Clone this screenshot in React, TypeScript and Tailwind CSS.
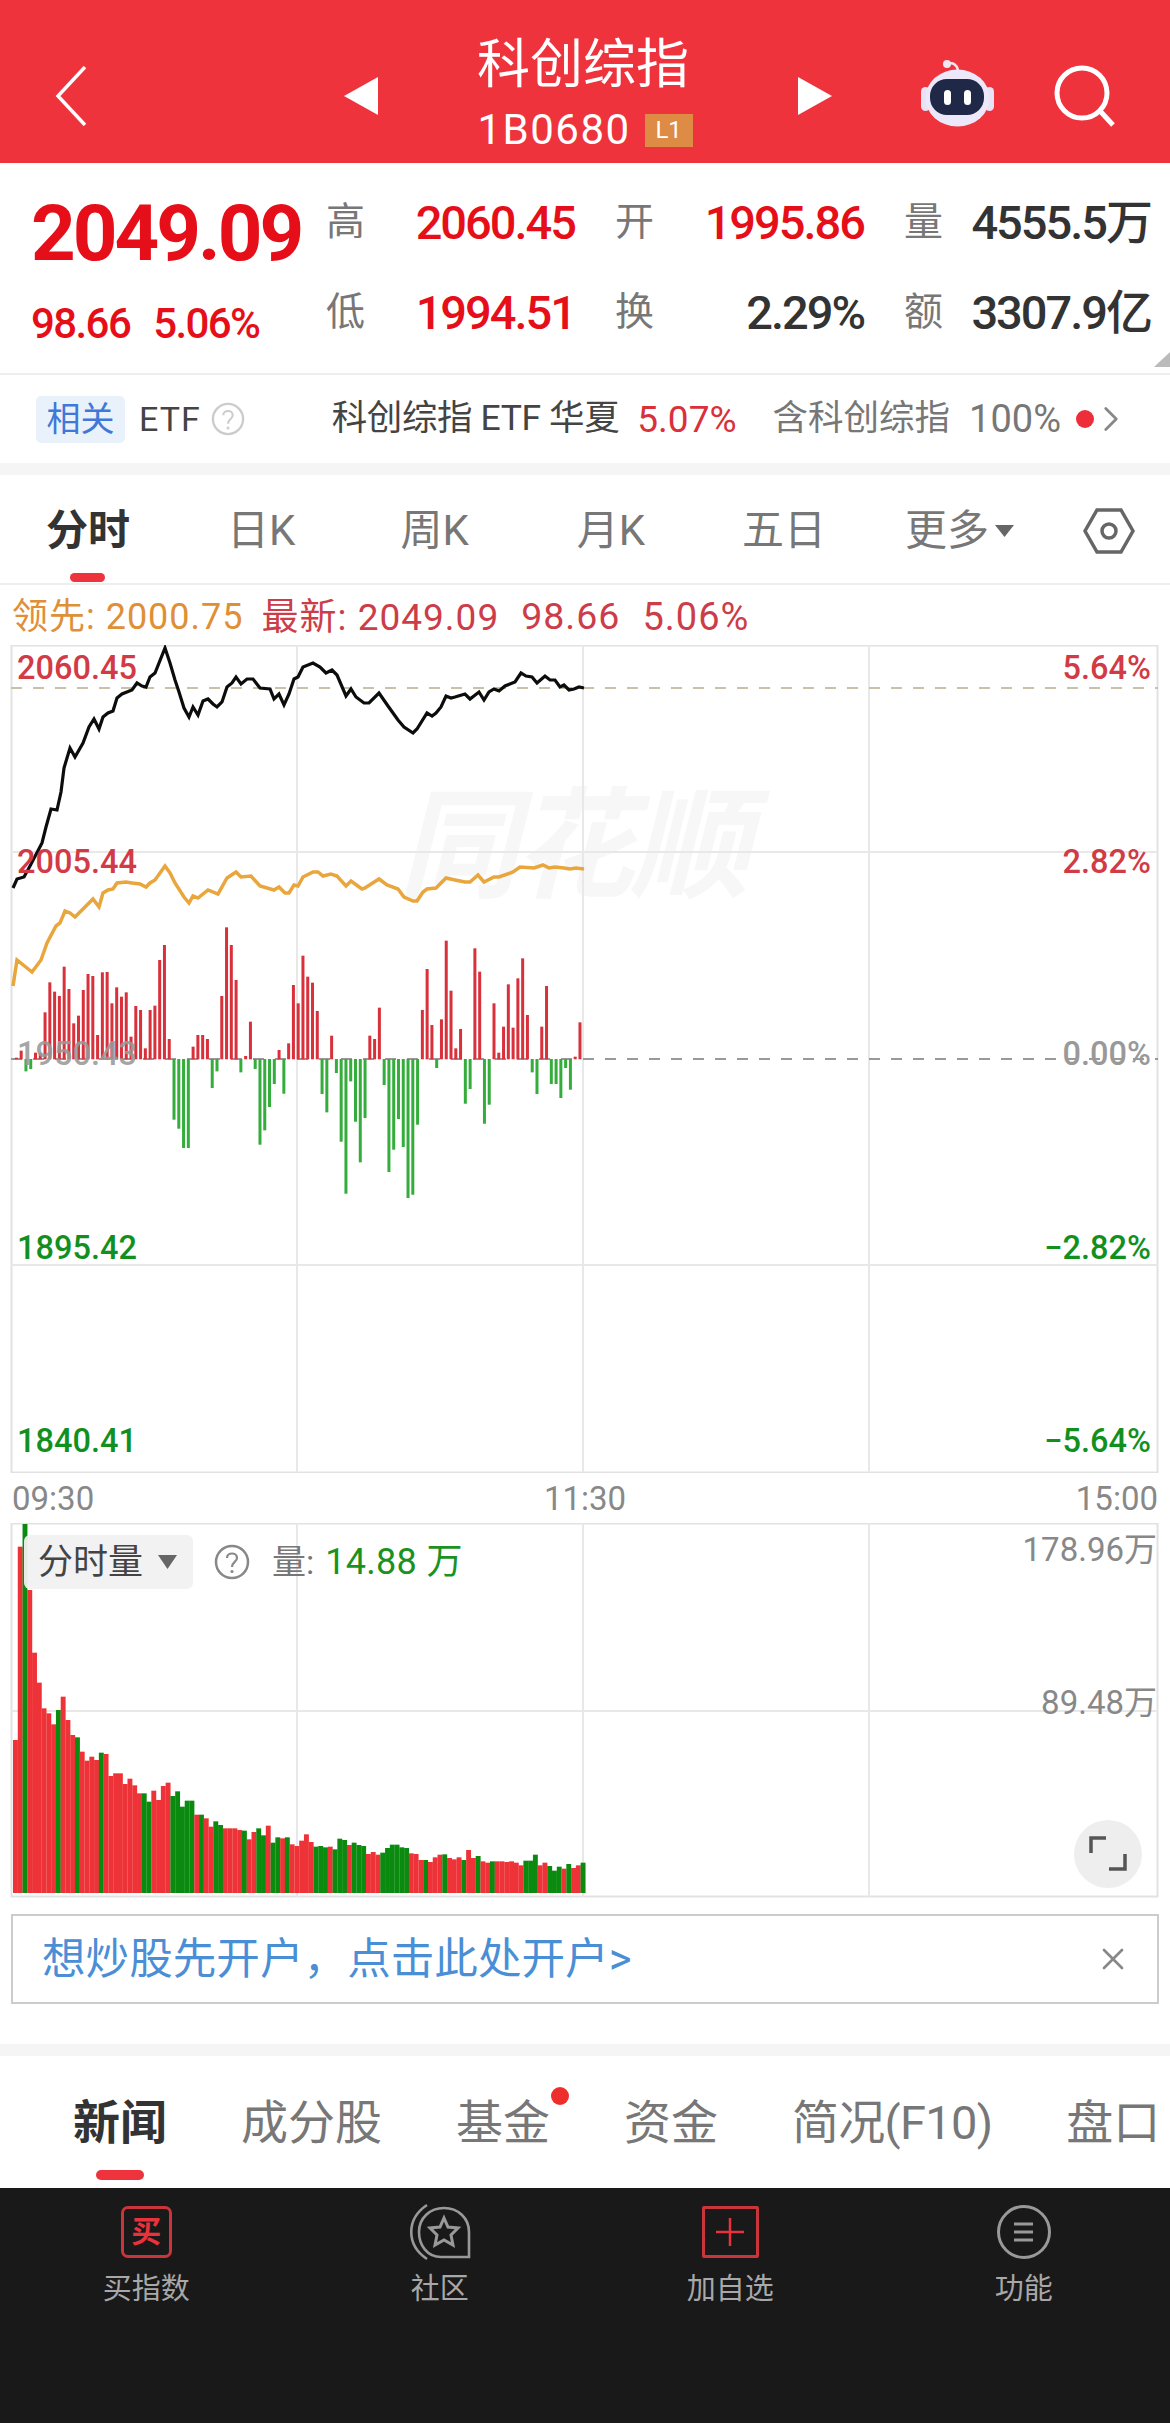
import { ChevronRight, X } from 'lucide-react'

const FONT = 'font-[Roboto,"Noto_Sans_CJK_SC",sans-serif]'

// top of each tick in the price chart, zoomed pixels, 898 is the zero line
const tickTops = [
  893, 872, 935, 928, 878, 880, 757, 667, 695, 708, 620, 687, 790, 767, 690, 642, 648, 825, 637, 636,
  730, 682, 710, 697, 830, 738, 750, 865, 750, 737, 600, 555, 837, 1080, 1107, 1165, 1165, 860, 825, 825,
  837, 985, 935, 708, 502, 555, 660, 938, 888, 785, 928, 1155, 1112, 1042, 973, 870, 1002, 850, 675, 730,
  587, 650, 668, 753, 1003, 1058, 827, 940, 1146, 1302, 965, 1086, 1208, 1075, 827, 837, 743, 976, 1237, 1170,
  1078, 1162, 1315, 1305, 1095, 750, 627, 795, 925, 778, 542, 692, 865, 807, 1032, 988, 565, 635, 1092, 1035,
  730, 878, 800, 673, 803, 655, 595, 765, 938, 1003, 800, 678, 973, 973, 1015, 925, 990, 890, 787,
]

const volumes: [number, 'r' | 'g'][] = [
  [720, 'r'], [140, 'r'], [72, 'g'], [270, 'r'], [458, 'r'], [548, 'r'], [625, 'r'], [640, 'r'], [673, 'r'], [630, 'g'],
  [590, 'r'], [660, 'r'], [705, 'r'], [712, 'g'], [755, 'r'], [782, 'r'], [770, 'r'], [780, 'r'], [758, 'g'], [762, 'r'],
  [828, 'r'], [820, 'r'], [820, 'r'], [852, 'r'], [836, 'r'], [856, 'r'], [880, 'r'], [880, 'g'], [905, 'g'], [872, 'r'],
  [900, 'r'], [858, 'r'], [848, 'r'], [888, 'g'], [874, 'g'], [920, 'g'], [902, 'g'], [902, 'g'], [944, 'r'], [944, 'g'],
  [955, 'r'], [980, 'r'], [964, 'g'], [975, 'g'], [985, 'r'], [985, 'r'], [985, 'r'], [990, 'r'], [992, 'g'], [1018, 'r'],
  [996, 'r'], [985, 'g'], [1006, 'g'], [977, 'r'], [1028, 'g'], [1012, 'g'], [1015, 'r'], [1012, 'g'], [1033, 'r'], [1038, 'r'],
  [1022, 'r'], [1003, 'r'], [1026, 'r'], [1040, 'g'], [1038, 'g'], [1042, 'g'], [1040, 'r'], [1048, 'g'], [1016, 'g'], [1020, 'g'],
  [1035, 'r'], [1028, 'g'], [1035, 'g'], [1038, 'g'], [1062, 'r'], [1056, 'r'], [1064, 'r'], [1058, 'g'], [1044, 'g'], [1034, 'g'],
  [1034, 'g'], [1042, 'g'], [1044, 'g'], [1060, 'r'], [1062, 'r'], [1080, 'r'], [1080, 'g'], [1086, 'r'], [1072, 'r'], [1064, 'r'],
  [1063, 'g'], [1074, 'r'], [1078, 'r'], [1072, 'r'], [1080, 'g'], [1050, 'r'], [1074, 'r'], [1068, 'g'], [1084, 'r'], [1088, 'r'],
  [1084, 'g'], [1084, 'r'], [1084, 'r'], [1086, 'r'], [1084, 'r'], [1088, 'r'], [1096, 'r'], [1082, 'g'], [1082, 'g'], [1064, 'g'],
  [1096, 'r'], [1088, 'r'], [1098, 'g'], [1112, 'g'], [1100, 'g'], [1106, 'r'], [1092, 'g'], [1104, 'r'], [1096, 'r'], [1088, 'g'],
]

const priceLine =
  '13,888 17,879 24,877 30,866 42,843 46,827 51,809 57,810 61,792 64,768 70,748 75,757 83,743 89,727 94,719 99,729 103,717 108,713 113,711 117,698 122,694 132,690 137,683 142,686 146,687 150,677 155,673 165,648 170,663 175,680 179,692 184,708 189,717 193,707 198,715 203,701 208,699 213,704 217,707 222,702 227,687 232,683 236,677 241,684 247,679 253,679 260,688 270,689 274,699 279,694 284,705 289,694 294,679 298,677 303,667 313,663 320,667 326,673 332,670 337,675 346,696 351,689 356,697 364,703 369,703 379,693 388,706 398,720 404,727 413,733 417,729 427,713 432,716 436,713 441,707 446,696 451,698 455,697 465,694 470,699 479,692 484,700 489,692 494,689 499,691 505,686 515,682 521,673 526,676 532,677 537,683 545,676 550,680 555,680 560,687 564,685 569,690 574,689 579,687 584,688'

const avgLine =
  '13,986 17,960 32,972 41,960 47,943 56,926 60,923 65,911 70,913 75,917 83,909 93,899 99,907 103,893 108,890 113,889 117,883 126,882 132,883 140,884 146,887 150,883 155,880 165,866 170,873 175,883 184,897 189,903 193,896 198,898 208,890 218,894 227,878 236,872 241,877 251,876 260,886 274,890 279,887 285,893 289,893 294,885 298,886 303,877 313,872 318,872 323,876 331,874 337,876 346,886 351,881 362,889 365,888 379,879 387,885 398,889 404,897 413,901 417,901 423,892 427,889 436,888 446,878 455,880 465,882 470,882 478,875 484,882 494,877 499,877 513,872 520,867 534,868 543,865 549,868 555,867 564,868 570,869 576,868 584,869'

function Triangle({ dir }: { dir: 'left' | 'right' }) {
  return (
    <svg width="34" height="38" viewBox="0 0 34 38">
      <path d={dir === 'left' ? 'M34 0V38L0 19Z' : 'M0 0V38L34 19Z'} fill="#fff" />
    </svg>
  )
}

function BackIcon() {
  return (
    <svg width="32" height="60" viewBox="0 0 32 60" fill="none" stroke="#fff" strokeWidth="3.5">
      <path d="M30 1L3 30L30 59" />
    </svg>
  )
}

function RobotIcon() {
  return (
    <svg width="76" height="72" viewBox="0 0 76 72">
      <path d="M28 7C33 5 37 8 38 13" stroke="#f1e6f2" strokeWidth="2.5" fill="none" />
      <circle cx="27" cy="7" r="4" fill="#efe7f2" />
      <rect x="1" y="30" width="9" height="24" rx="4.5" fill="#e9e2f5" />
      <rect x="65" y="30" width="9" height="24" rx="4.5" fill="#e9e2f5" />
      <ellipse cx="37.5" cy="41" rx="32" ry="28.5" fill="#ece8f9" />
      <rect x="10" y="22" width="54" height="36" rx="17" fill="#1f2846" />
      <rect x="24" y="33" width="7" height="15" rx="3.5" fill="#fff" />
      <rect x="44" y="33" width="7" height="15" rx="3.5" fill="#fff" />
    </svg>
  )
}

function SearchIcon() {
  return (
    <svg width="62" height="62" viewBox="0 0 62 62" fill="none" stroke="#fff" strokeWidth="5">
      <circle cx="28" cy="28" r="25" />
      <path d="M47 47L59 60" />
    </svg>
  )
}

function HexIcon() {
  return (
    <svg width="52" height="46" viewBox="0 0 52 46" fill="none" stroke="#666" strokeWidth="3.5">
      <path d="M14 2H38L50 23L38 44H14L2 23Z" />
      <circle cx="26" cy="23" r="7" />
    </svg>
  )
}

function QuestionIcon({ size, color }: { size: number; color: string }) {
  return (
    <svg width={size} height={size} viewBox="0 0 36 36" fill="none">
      <circle cx="18" cy="18" r="16" stroke={color} strokeWidth="2.5" />
      <path d="M13 14C13 8 23 8 23 14C23 18 18 18 18 23" stroke={color} strokeWidth="2.2" />
      <circle cx="18" cy="27.5" r="1.6" fill={color} />
    </svg>
  )
}

function Stat({ label, value, valueClass }: { label: string; value: string; valueClass: string }) {
  return (
    <div className="flex items-center justify-between">
      <span className="text-[39px] leading-none text-[#777]">{label}</span>
      <span className={`text-[47px] leading-none font-medium tracking-[-2px] ${valueClass}`}>{value}</span>
    </div>
  )
}

function ChartLabel({ text, pos, color }: { text: string; pos: string; color: string }) {
  return <span className={`absolute text-[32.5px] leading-none font-medium ${pos} ${color}`}>{text}</span>
}

function PriceChart() {
  return (
    <div className="relative h-[828px]">
      <span className="absolute left-[398px] top-[142px] text-[120px] leading-none font-bold italic tracking-[-4px] text-[#f7f7f7]">同花顺</span>
      <svg className="absolute inset-0" width="1170" height="828" viewBox="0 645 1170 828">
        <rect x="11.5" y="645.5" width="1146" height="827" fill="none" stroke="#e2e2e2" strokeWidth="2" />
        {[852, 1265].map(y => <line key={y} x1="11" x2="1158" y1={y} y2={y} stroke="#e8e8e8" strokeWidth="2" />)}
        {[297, 583, 869].map(x => <line key={x} x1={x} x2={x} y1="645" y2="1472" stroke="#e8e8e8" strokeWidth="2" />)}
        <line x1="11" x2="1158" y1="688" y2="688" stroke="#c9c2a8" strokeWidth="2" strokeDasharray="11 11" />
        <line x1="11" x2="1158" y1="1059" y2="1059" stroke="#999" strokeWidth="2" strokeDasharray="11 11" />
        {tickTops.map((t, i) => {
          const x = 14.9 + 4.776 * i
          const top = 760 + t / 3
          const up = t <= 898
          return (
            <rect
              key={i}
              x={x}
              y={up ? top : 1059}
              width="3"
              height={Math.abs(top - 1059.3)}
              fill={up ? '#d8313b' : '#35ad3c'}
            />
          )
        })}
        <polyline points={avgLine} fill="none" stroke="#e8a63c" strokeWidth="3.5" />
        <polyline points={priceLine} fill="none" stroke="#0c0c0c" strokeWidth="3.2" />
      </svg>
      <ChartLabel text="2060.45" pos="left-[17px] top-[7px]" color="text-[#d23a46]" />
      <ChartLabel text="5.64%" pos="right-[19px] top-[7px]" color="text-[#d23a46]" />
      <ChartLabel text="2005.44" pos="left-[17px] top-[201px]" color="text-[#d23a46]" />
      <ChartLabel text="2.82%" pos="right-[19px] top-[201px]" color="text-[#d23a46]" />
      <ChartLabel text="1950.43" pos="left-[17px] top-[393px]" color="text-[#999]/90" />
      <ChartLabel text="0.00%" pos="right-[19px] top-[393px]" color="text-[#999]" />
      <ChartLabel text="1895.42" pos="left-[17px] top-[587px]" color="text-[#12901f]" />
      <ChartLabel text="−2.82%" pos="right-[19px] top-[587px]" color="text-[#12901f]" />
      <ChartLabel text="1840.41" pos="left-[17px] top-[780px]" color="text-[#12901f]" />
      <ChartLabel text="−5.64%" pos="right-[19px] top-[780px]" color="text-[#12901f]" />
    </div>
  )
}

function VolumeChart() {
  return (
    <div className="relative h-[375px]">
      <svg className="absolute inset-0" width="1170" height="375" viewBox="0 1523 1170 375">
        <rect x="11.5" y="1523.5" width="1146" height="373" fill="none" stroke="#e2e2e2" strokeWidth="2" />
        <line x1="11" x2="1158" y1="1711" y2="1711" stroke="#e8e8e8" strokeWidth="2" />
        {[297, 583, 869].map(x => <line key={x} x1={x} x2={x} y1="1523" y2="1897" stroke="#e8e8e8" strokeWidth="2" />)}
        {volumes.map(([t, c], i) => {
          const top = 1500 + t / 3
          return (
            <rect
              key={i}
              x={13 + 4.77 * i}
              y={top}
              width="4.9"
              height={1893 - top}
              fill={c === 'r' ? '#ee3338' : '#0b8a10'}
            />
          )
        })}
      </svg>
      <div className="absolute left-[24px] top-[12px] flex items-center">
        <div className="flex h-[54px] w-[169px] items-center rounded-[6px] bg-[#f1f1f1]/95 pl-[14px]">
          <span className="text-[35px] leading-none text-[#444]">分时量</span>
          <svg className="ml-[15px]" width="19" height="14" viewBox="0 0 19 14"><path d="M0 0H19L9.5 14Z" fill="#666" /></svg>
        </div>
        <div className="ml-[21px]"><QuestionIcon size={36} color="#888" /></div>
        <span className="ml-[22px] text-[34px] leading-none text-[#777]">量:</span>
        <span className="ml-[11px] text-[36px] leading-none tracking-[0.3px] text-[#1a921f]">14.88 万</span>
      </div>
      <span className="absolute right-[13px] top-[10px] text-[33px] leading-none text-[#888]">178.96万</span>
      <span className="absolute right-[13px] top-[163px] text-[33px] leading-none text-[#888]">89.48万</span>
      <div className="absolute left-[1074px] top-[297px] flex h-[68px] w-[68px] items-center justify-center rounded-full bg-[#eeeeee]">
        <svg width="38" height="36" viewBox="0 0 38 36" fill="none" stroke="#555" strokeWidth="3.5">
          <path d="M2 17V2H17" />
          <path d="M36 18V33H20" />
        </svg>
      </div>
    </div>
  )
}

export default function App() {
  return (
    <div className={`flex h-[2423px] w-[1170px] flex-col overflow-hidden bg-white ${FONT}`}>
      {/* header */}
      <header className="flex h-[163px] items-center bg-[#ee333d] text-white">
        <div className="ml-[55px] mt-[28px]"><BackIcon /></div>
        <div className="ml-[257px] mt-[28px]"><Triangle dir="left" /></div>
        <div className="ml-[100px] mt-[22px] flex w-[220px] flex-col items-center">
          <span className="mr-[10px] whitespace-nowrap text-[53px] leading-[62px]">科创综指</span>
          <div className="mr-[6px] mt-[13px] flex items-center whitespace-nowrap">
            <span className="text-[42px] leading-none tracking-[1.5px]">1B0680</span>
            <span className="ml-[14px] flex h-[33px] w-[48px] items-center justify-center bg-[#de8b45] text-[24px] leading-none">L1</span>
          </div>
        </div>
        <div className="ml-[100px] mt-[28px]"><Triangle dir="right" /></div>
        <div className="ml-[88px] mt-[22px]"><RobotIcon /></div>
        <div className="ml-[58px] mt-[28px]"><SearchIcon /></div>
      </header>

      {/* quote */}
      <section className="relative flex h-[212px] border-b-2 border-[#eeeeee]">
        <div className="w-[326px] pl-[31px]">
          <div className="mt-[31px] text-[78px] leading-[80px] font-bold tracking-[-3px] text-[#e60f19]">2049.09</div>
          <div className="mt-[29px] flex text-[42px] leading-none font-medium tracking-[-1.6px] text-[#e60f19]">
            <span>98.66</span>
            <span className="ml-[23px]">5.06%</span>
          </div>
        </div>
        <div className="mt-[14px] grid h-[180px] grid-cols-[249px_249px_247px] grid-rows-2 gap-x-[40px]">
          <Stat label="高" value="2060.45" valueClass="text-[#e60f19]" />
          <Stat label="开" value="1995.86" valueClass="text-[#e60f19]" />
          <Stat label="量" value="4555.5万" valueClass="text-[#333]" />
          <Stat label="低" value="1994.51" valueClass="text-[#e60f19]" />
          <Stat label="换" value="2.29%" valueClass="text-[#333]" />
          <Stat label="额" value="3307.9亿" valueClass="text-[#333]" />
        </div>
        <svg className="absolute bottom-[6px] right-0" width="16" height="15" viewBox="0 0 16 15"><path d="M16 0V15H0Z" fill="#bbb" /></svg>
      </section>

      {/* related etf */}
      <section className="flex h-[88px] items-center pl-[36px] text-[35.5px] leading-none">
        <span className="flex h-[47px] w-[89px] items-center justify-center rounded-[5px] bg-[#e9f1fb] text-[34px] text-[#3f78d8]">相关</span>
        <span className="ml-[14px] text-[34px] tracking-[1px] text-[#444]">ETF</span>
        <div className="ml-[10px]"><QuestionIcon size={34} color="#ccc" /></div>
        <span className="ml-[87px] tracking-[-0.4px] text-[#444]">科创综指 ETF 华夏</span>
        <span className="ml-[18px] text-[37px] text-[#d9303c]">5.07%</span>
        <span className="ml-[36px] text-[#777]">含科创综指</span>
        <span className="ml-[19px] text-[38px] text-[#777]">100%</span>
        <span className="ml-[15px] h-[18px] w-[18px] rounded-full bg-[#ee2d3a]" />
        <ChevronRight className="-ml-[4px] text-[#888]" size={42} strokeWidth={1.6} />
      </section>
      <div className="h-[12px] bg-[#f5f5f5]" />

      {/* period tabs */}
      <nav className="relative flex h-[110px] items-center border-b-2 border-[#eeeeee] pt-[4px] text-[42px] leading-none text-[#777]">
        <span className="ml-[46px] font-bold text-[#333]">分时</span>
        <span className="ml-[97px]">日K</span>
        <span className="ml-[105px]">周K</span>
        <span className="ml-[108px]">月K</span>
        <span className="ml-[97px]">五日</span>
        <span className="ml-[79px]">更多</span>
        <svg className="ml-[6px]" width="19" height="12" viewBox="0 0 19 12"><path d="M0 0H19L9.5 12Z" fill="#666" /></svg>
        <div className="ml-[69px]"><HexIcon /></div>
        <span className="absolute bottom-[1px] left-[70px] h-[9px] w-[35px] rounded-full bg-[#ee333d]" />
      </nav>

      {/* legend */}
      <div className="flex h-[60px] items-center pl-[12px] pt-[4px] text-[36px] leading-none tracking-[1px]">
        <span className="text-[#df8f35]">领先: 2000.75</span>
        <span className="ml-[18px] text-[37px] text-[#cc3d49]">最新: 2049.09</span>
        <span className="ml-[22px] text-[37.5px] text-[#cc3d49]">98.66</span>
        <span className="ml-[22px] text-[38px] text-[#cc3d49]">5.06%</span>
      </div>

      <PriceChart />

      <div className="flex h-[50px] items-center justify-between px-[12px] text-[33px] leading-none text-[#888]">
        <span>09:30</span>
        <span>11:30</span>
        <span>15:00</span>
      </div>

      <VolumeChart />

      {/* open account banner */}
      <div className="mx-[11px] mt-[16px] flex h-[90px] items-center justify-between border-2 border-[#cccccc] pl-[29px] pr-[26px]">
        <span className="pt-[2px] text-[43.6px] leading-none text-[#4a8fd6]">想炒股先开户，点击此处开户&gt;</span>
        <X className="text-[#888]" size={36} strokeWidth={1.8} />
      </div>
      <div className="mt-[40px] h-[12px] bg-[#f5f5f5]" />

      {/* section tabs */}
      <nav className="relative flex h-[132px] items-center overflow-hidden text-[47px] leading-none whitespace-nowrap text-[#777]">
        <span className="ml-[73px] font-bold text-[#333]">新闻</span>
        <span className="ml-[74px]">成分股</span>
        <span className="relative ml-[74px]">
          基金
          <span className="absolute -right-[19px] -top-[12px] h-[18px] w-[18px] rounded-full bg-[#ee2d2d]" />
        </span>
        <span className="ml-[74px]">资金</span>
        <span className="ml-[74px] tracking-[-0.7px]">简况(F10)</span>
        <span className="ml-[74px] shrink-0">盘口</span>
        <span className="absolute bottom-[8px] left-[96px] h-[10px] w-[48px] rounded-full bg-[#ee333d]" />
      </nav>

      {/* bottom bar */}
      <footer className="grid flex-1 grid-cols-4 bg-[#191919] text-[29px] leading-none text-[#a8a8a8]">
        <div className="flex flex-col items-center pt-[18px]">
          <div className="flex h-[52px] w-[51px] items-center justify-center rounded-[7px] border-[3px] border-[#c9353a]">
            <span className="text-[30px] leading-none font-bold text-[#e8323c]">买</span>
          </div>
          <span className="mt-[17px]">买指数</span>
        </div>
        <div className="flex flex-col items-center pt-[15px] pl-[2px]">
          <svg width="62" height="58" viewBox="0 0 62 58" fill="none" stroke="#999" strokeWidth="2.6">
            <path d="M18 2C-3 16 -3 42 18 56" />
            <path d="M60 54H32C18 54 10 42 10 29C10 15 21 5 35 5C49 5 60 15 60 29Z" />
            <path d="M35 15L39 24L49 25L42 32L44 42L35 37L26 42L28 32L21 25L31 24Z" strokeWidth="3" />
          </svg>
          <span className="mt-[14px]">社区</span>
        </div>
        <div className="flex flex-col items-center pt-[18px] pr-[2px]">
          <div className="flex h-[52px] w-[57px] items-center justify-center rounded-[2px] border-[3px] border-[#c9353a]">
            <svg width="28" height="28" viewBox="0 0 28 28" stroke="#e8323c" strokeWidth="2.5"><path d="M14 0V28M0 14H28" /></svg>
          </div>
          <span className="mt-[17px]">加自选</span>
        </div>
        <div className="flex flex-col items-center pt-[17px]">
          <div className="flex h-[54px] w-[54px] items-center justify-center rounded-full border-[3px] border-[#999]">
            <svg width="19" height="20" viewBox="0 0 19 20" stroke="#999" strokeWidth="3"><path d="M0 2H19M0 10H19M0 18H19" /></svg>
          </div>
          <span className="mt-[16px]">功能</span>
        </div>
      </footer>
    </div>
  )
}
